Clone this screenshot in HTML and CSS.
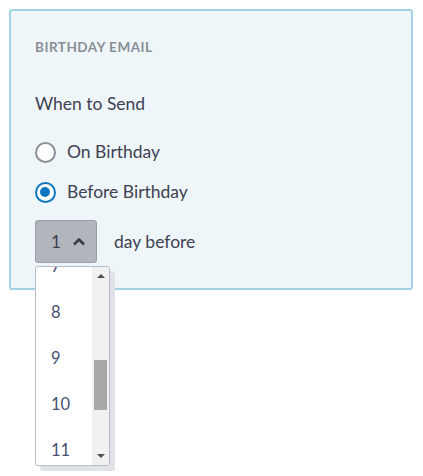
FILE: index.html
```html
<!DOCTYPE html>
<html>
<head>
<meta charset="utf-8">
<link rel="stylesheet" href="styles.css">
</head>
<body>
<div class="page">
  <section class="card">
    <h2 class="card-title">BIRTHDAY EMAIL</h2>
    <p class="label">When to Send</p>
    <div class="radios">
      <label class="radio"><span class="dot"></span>On Birthday</label>
      <label class="radio checked"><span class="dot"></span>Before Birthday</label>
    </div>
    <div class="days">
      <div class="select-wrap">
        <button class="select"><span>1</span>
          <svg width="14" height="9" viewBox="0 0 14 9"><path d="M2 7.5 L7 2.5 L12 7.5" fill="none" stroke="#3b3e48" stroke-width="2.6" stroke-linejoin="round"/></svg>
        </button>
        <div class="menu">
          <ul class="options">
            <li>7</li>
            <li>8</li>
            <li>9</li>
            <li>10</li>
            <li>11</li>
          </ul>
          <div class="scrollbar">
            <span class="arrow up"></span>
            <div class="track"><div class="thumb"></div></div>
            <span class="arrow down"></span>
          </div>
        </div>
      </div>
      <span class="days-text">day before</span>
    </div>
  </section>
</div>
</body>
</html>
```
FILE: styles.css
```css
* { box-sizing: border-box; }
html, body { margin: 0; background: #fff; }
body { font-family: Lato, "Open Sans", sans-serif; color: #3e4150; }
.page { padding: 9px 10px 0 9px; width: 423px; height: 476px; }
.card {
  width: 404px;
  height: 281px;
  background: #eef6fa;
  border: 2px solid #a3d1e7;
  border-radius: 3px;
  padding: 28px 24px 0 24px;
}
.card-title {
  margin: 0;
  font-size: 13.5px;
  font-weight: 700;
  letter-spacing: 0.5px;
  color: #8b8e96;
  line-height: 16px;
}
.label {
  margin: 39px 0 0 0;
  font-size: 17.5px;
  line-height: 20px;
}
.radios { margin-top: 27px; display: flex; flex-direction: column; gap: 18px; }
.radio { display: flex; align-items: center; gap: 11px; font-size: 17.5px; line-height: 22px; }
.dot {
  width: 21px; height: 21px; border-radius: 50%;
  border: 2px solid #8d9097; background: #fff;
  display: inline-block; position: relative;
}
.checked .dot { border-color: #0e77c0; border-width: 2.5px; }
.checked .dot::after {
  content: ""; position: absolute; left: 3px; top: 3px; width: 10px; height: 10px;
  border-radius: 50%; background: #0e77c0;
}
.days { margin-top: 17px; display: flex; align-items: center; gap: 17px; }
.select-wrap { position: relative; }
.select {
  width: 62px; height: 43px;
  background: #b2b5bb; border: 1px solid #9a9da4; border-radius: 3px;
  display: flex; align-items: center; gap: 11px; padding: 0 0 0 15px;
  font-family: inherit; font-size: 17px; color: #3e4150;
}
.days-text { font-size: 17.5px; }
.menu {
  position: absolute; left: 0; top: 46px;
  width: 75px; height: 200px;
  background: #fff; border: 1px solid #b9bcc2; border-radius: 3px;
  box-shadow: 5px 5px 0 #dfe2e6;
  display: flex; overflow: hidden;
}
.options {
  list-style: none; margin: 0; padding: 0; flex: 1;
  margin-top: -24px;
}
.options li {
  height: 46px; line-height: 46px; padding-left: 15px;
  font-size: 16.5px; color: #4a5072;
}
.scrollbar {
  width: 17px; background: #f1f1f1;
  display: flex; flex-direction: column; align-items: center;
}
.arrow { width: 0; height: 0; border-left: 4px solid transparent; border-right: 4px solid transparent; margin: 7px 0; }
.arrow.up { border-bottom: 4px solid #505050; }
.arrow.down { border-top: 4px solid #505050; }
.track { flex: 1; width: 100%; padding: 75px 2px 0 2px; }
.thumb { height: 50px; background: #a8a8a8; }
```
